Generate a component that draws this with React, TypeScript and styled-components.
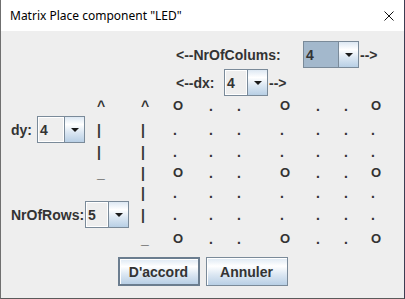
import styled, { createGlobalStyle } from "styled-components";

const GlobalStyle = createGlobalStyle`
  html, body {
    margin: 0;
    padding: 0;
    background: #3a3a4c;
  }
  body {
    width: 405px;
    height: 299px;
    overflow: hidden;
  }
`;

const metalGradient = `linear-gradient(180deg, #dde8f3 0%, #ffffff 30%, #dde8f3 60%, #b8cfe5 100%)`;

const Window = styled.div`
  width: 405px;
  height: 299px;
  box-sizing: border-box;
  border-left: 1px solid #6f6f6f;
  border-right: 1px solid #3c3c52;
  border-bottom: 1px solid #5a5a5a;
  display: flex;
  flex-direction: column;
  font-family: "Liberation Sans", Arial, sans-serif;
`;

const TitleBar = styled.div`
  height: 31px;
  flex: none;
  background: #ffffff;
  display: flex;
  align-items: center;
  padding: 0 10px 0 9px;
`;

const Title = styled.span`
  flex: 1;
  font-family: "Noto Sans", "Open Sans", sans-serif;
  font-size: 12px;
  color: #000;
`;

const Content = styled.div`
  flex: 1;
  background: #eeeeee;
  display: flex;
  flex-direction: column;
  color: #333333;
  font-size: 14px;
  font-weight: bold;
`;

const HeaderRow = styled.div<{ $top: number }>`
  display: flex;
  align-items: center;
  height: 27px;
  margin-top: ${(p) => p.$top}px;
  padding-left: 175px;
`;

const Label = styled.span<{ $width?: number }>`
  flex: none;
  width: ${(p) => (p.$width ? `${p.$width}px` : "auto")};
  white-space: nowrap;
`;

const Trail = styled.span`
  margin-left: 1px;
`;

const ComboBox = styled.div<{ $width: number }>`
  display: inline-flex;
  flex: none;
  width: ${(p) => p.$width}px;
  height: 27px;
  box-sizing: border-box;
  border: 1px solid #7a8a99;
`;

const ComboEditor = styled.div<{ $focused?: boolean }>`
  flex: 1;
  display: flex;
  align-items: center;
  padding-left: 2px;
  background: ${(p) => (p.$focused ? "#a3b8cc" : "#eeeeee")};
  box-shadow: ${(p) => (p.$focused ? "none" : "inset 1px 1px 0 #ffffff, inset -1px -1px 0 #ffffff")};
`;

const ComboArrow = styled.div`
  width: 19px;
  flex: none;
  border-left: 1px solid #7a8a99;
  background: ${metalGradient};
  display: flex;
  align-items: center;
  justify-content: center;
`;

const Caret = styled.span`
  width: 0;
  height: 0;
  border-left: 4px solid transparent;
  border-right: 4px solid transparent;
  border-top: 4px solid #1a1a1a;
  margin-top: 1px;
`;

const MainGrid = styled.div`
  display: grid;
  grid-template-columns: 96px 44px 32px 36px 28px 43px 36px 28px 27px 1fr;
  grid-template-rows: 20px 27px 18px 24px 16px 27px 22px;
  align-items: center;
`;

const Cell = styled.span<{ $row: number; $col: number }>`
  grid-row: ${(p) => p.$row};
  grid-column: ${(p) => p.$col};
  line-height: 16px;
  white-space: nowrap;
`;

const LedO = styled(Cell)`
  font-size: 13px;
`;

const LeftField = styled.div<{ $row: number; $span: number }>`
  grid-row: ${(p) => p.$row};
  grid-column: 1 / span ${(p) => p.$span};
  display: flex;
  align-items: center;
  padding-left: 10px;
`;

const ButtonRow = styled.div`
  display: flex;
  justify-content: center;
  gap: 6px;
  margin-top: 7px;
`;

const DialogButton = styled.button<{ $default?: boolean }>`
  width: 82px;
  height: 29px;
  box-sizing: border-box;
  padding: 0;
  font-family: "Liberation Sans", Arial, sans-serif;
  font-size: 14px;
  font-weight: bold;
  color: #333333;
  background: ${metalGradient};
  border: ${(p) => (p.$default ? "2px solid #6b7d8f" : "1px solid #7a8a99")};
  box-shadow: inset 1px 1px 0 #ffffff;
`;

function Combo({ value, width, focused }: { value: string; width: number; focused?: boolean }) {
  return (
    <ComboBox $width={width}>
      <ComboEditor $focused={focused}>{value}</ComboEditor>
      <ComboArrow>
        <Caret />
      </ComboArrow>
    </ComboBox>
  );
}

const ledRows = [
  ["O", ".", ".", "O", ".", ".", "O"],
  [".", ".", ".", ".", ".", ".", "."],
  [".", ".", ".", ".", ".", ".", "."],
  ["O", ".", ".", "O", ".", ".", "O"],
  [".", ".", ".", ".", ".", ".", "."],
  [".", ".", ".", ".", ".", ".", "."],
  ["O", ".", ".", "O", ".", ".", "O"],
];

const dxMarks = ["^", "|", "|", "_"];
const rowMarks = ["^", "|", "|", "|", "|", "|", "_"];

export default function App() {
  return (
    <>
      <GlobalStyle />
      <Window>
        <TitleBar>
          <Title>Matrix Place component "LED"</Title>
          <svg width="10" height="10" viewBox="0 0 10 10">
            <path d="M0.5 0.5 L9.5 9.5 M9.5 0.5 L0.5 9.5" stroke="#111" strokeWidth="1" />
          </svg>
        </TitleBar>
        <Content>
          <HeaderRow $top={10}>
            <Label $width={127}>&lt;--NrOfColums:</Label>
            <Combo value="4" width={56} focused />
            <Trail>--&gt;</Trail>
          </HeaderRow>
          <HeaderRow $top={1}>
            <Label $width={48}>&lt;--dx:</Label>
            <Combo value="4" width={44} />
            <Trail>--&gt;</Trail>
          </HeaderRow>
          <MainGrid>
            <LeftField $row={2} $span={1}>
              <Label $width={26}>dy:</Label>
              <Combo value="4" width={48} />
            </LeftField>
            <LeftField $row={6} $span={3}>
              <Label $width={74}>NrOfRows:</Label>
              <Combo value="5" width={44} />
            </LeftField>
            {dxMarks.map((m, i) => (
              <Cell key={`a${i}`} $row={i + 1} $col={2}>
                {m}
              </Cell>
            ))}
            {rowMarks.map((m, i) => (
              <Cell key={`b${i}`} $row={i + 1} $col={3}>
                {m}
              </Cell>
            ))}
            {ledRows.map((row, r) =>
              row.map((c, k) =>
                c === "O" ? (
                  <LedO key={`${r}-${k}`} $row={r + 1} $col={k + 4}>
                    O
                  </LedO>
                ) : (
                  <Cell key={`${r}-${k}`} $row={r + 1} $col={k + 4}>
                    {c}
                  </Cell>
                )
              )
            )}
          </MainGrid>
          <ButtonRow>
            <DialogButton $default>D'accord</DialogButton>
            <DialogButton>Annuler</DialogButton>
          </ButtonRow>
        </Content>
      </Window>
    </>
  );
}
